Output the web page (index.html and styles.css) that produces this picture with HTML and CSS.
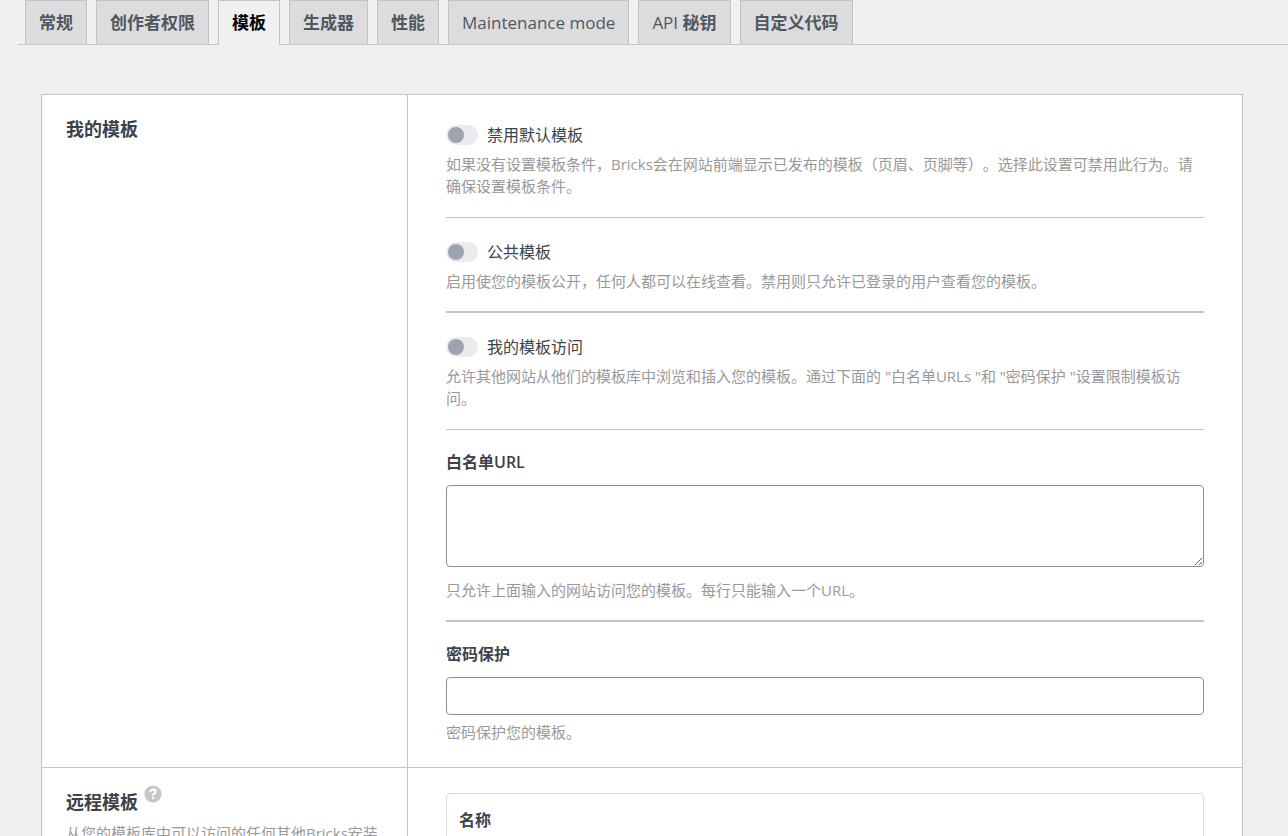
FILE: index.html
```html
<!DOCTYPE html>
<html lang="zh-CN">
<head>
<meta charset="utf-8">
<title>模板</title>
<link rel="stylesheet" href="styles.css">
</head>
<body>
<nav class="tabs">
  <a class="tab" href="#general">常规</a>
  <a class="tab" href="#access">创作者权限</a>
  <a class="tab tab-active" href="#templates">模板</a>
  <a class="tab" href="#builder">生成器</a>
  <a class="tab" href="#performance">性能</a>
  <a class="tab tab-latin" href="#maintenance">Maintenance mode</a>
  <a class="tab" href="#api"><span class="tab-word">API</span> 秘钥</a>
  <a class="tab" href="#code">自定义代码</a>
</nav>
<main class="settings">
  <section class="row">
    <div class="side"><h2 class="title">我的模板</h2></div>
    <div class="content">
      <div class="item">
        <label class="toggle"><input class="switch" type="checkbox">禁用默认模板</label>
        <p class="desc">如果没有设置模板条件，Bricks会在网站前端显示已发布的模板（页眉、页脚等）。选择此设置可禁用此行为。请确保设置模板条件。</p>
      </div>
      <div class="item item-short item-thick">
        <label class="toggle"><input class="switch" type="checkbox">公共模板</label>
        <p class="desc">启用使您的模板公开，任何人都可以在线查看。禁用则只允许已登录的用户查看您的模板。</p>
      </div>
      <div class="item">
        <label class="toggle"><input class="switch" type="checkbox">我的模板访问</label>
        <p class="desc">允许其他网站从他们的模板库中浏览和插入您的模板。通过下面的 "白名单URLs "和 "密码保护 "设置限制模板访问。</p>
      </div>
      <div class="item item-short item-field item-thick">
        <label class="label" for="whitelist">白名单URL</label>
        <textarea class="textarea" id="whitelist"></textarea>
        <p class="desc desc-area">只允许上面输入的网站访问您的模板。每行只能输入一个URL。</p>
      </div>
      <div class="item item-field item-last">
        <label class="label" for="password">密码保护</label>
        <input class="input" id="password" type="text">
        <p class="desc">密码保护您的模板。</p>
      </div>
    </div>
  </section>
  <section class="row">
    <div class="side">
      <h2 class="title">远程模板
        <svg class="help" viewBox="0 0 18 18" aria-hidden="true"><circle cx="9" cy="9" r="8.6" fill="#c6c6c6"/><path d="M6.400 7.100C6.400 5.400 7.500 4.600 9 4.600s2.600.8 2.600 2.200c0 1.700-2.500 1.800-2.500 3.700" fill="none" stroke="#fff" stroke-width="2.200"/><circle cx="9.100" cy="13" r="1.300" fill="#fff"/></svg>
      </h2>
      <p class="desc">从您的模板库中可以访问的任何其他Bricks安装</p>
    </div>
    <div class="content content-card">
      <div class="card"><label class="label" for="name">名称</label><input class="input" id="name" type="text"></div>
    </div>
  </section>
</main>
</body>
</html>
```
FILE: styles.css
```css
* { box-sizing: border-box; }

body {
  margin: 0;
  height: 100vh;
  overflow: hidden;
  background: #f0f0f0;
  color: #3c434a;
  font-family: "Open Sans", "Noto Sans CJK SC", sans-serif;
  font-size: 16px;
  line-height: 22px;
  text-spacing-trim: space-all;
}

.tabs {
  display: flex;
  gap: 9px;
  margin-left: 18px;
  padding-left: 7px;
  border-bottom: 1px solid #c3c4c7;
}

.tab {
  padding: 10px 13px 9px;
  border: 1px solid #c3c4c7;
  border-bottom: 0;
  background: #dcdcde;
  color: #50575e;
  font-size: 17px;
  font-weight: 600;
  line-height: 24px;
  text-decoration: none;
  white-space: nowrap;
}

.tab-latin,
.tab-word { font-weight: 500; }

.tab-active {
  margin-bottom: -1px;
  padding-bottom: 10px;
  background: #f0f0f0;
  color: #000;
}

.settings {
  margin: 49px 45px 0 41px;
  border: 1px solid #c3c4c7;
  background: #fff;
}

.row { display: flex; }
.row + .row { border-top: 1px solid #c3c4c7; }

.side {
  flex: 0 0 366px;
  padding: 23px 24px;
  border-right: 1px solid #c3c4c7;
}

.title {
  display: flex;
  margin: 0 0 9px;
  font-size: 18px;
  font-weight: 600;
  line-height: 22px;
}

.help {
  width: 18px;
  height: 18px;
  margin-left: 6px;
  margin-top: -6px;
}

.content { flex: 1; padding: 6px 38px 0; }

.item {
  padding: 23px 0 20px;
  border-bottom: 1px solid #c3c4c7;
}

.item-short { padding-bottom: 19px; }
.item-thick { border-bottom-width: 2px; }
.item-field { padding-top: 21px; }
.item-last { padding-bottom: 24px; border-bottom: 0; }

.toggle {
  display: flex;
  align-items: center;
  gap: 9px;
  margin-bottom: 7px;
}

.switch {
  appearance: none;
  width: 32px;
  height: 20px;
  margin: 0;
  padding: 2px;
  border-radius: 10px;
  background: #e9ebee;
}

.switch::before {
  content: "";
  display: block;
  width: 16px;
  height: 16px;
  border-radius: 50%;
  background: #9ca5af;
}

.switch:checked::before { margin-left: auto; }

.desc {
  margin: 0;
  color: #999;
  font-size: 15px;
}

.desc-area { margin-top: 12px; }

.label {
  display: block;
  margin-bottom: 12px;
  font-weight: 600;
}

.textarea,
.input {
  display: block;
  width: 100%;
  border: 1px solid #8c8f94;
  border-radius: 4px;
  background: #fff;
  font: inherit;
}

.textarea { height: 82px; resize: vertical; }
.input { height: 38px; margin-bottom: 6px; padding: 0 8px; }

.content-card { padding-top: 25px; }

.card {
  padding: 15px 12px;
  border: 1px solid #dcdcde;
  border-radius: 4px;
}
```
